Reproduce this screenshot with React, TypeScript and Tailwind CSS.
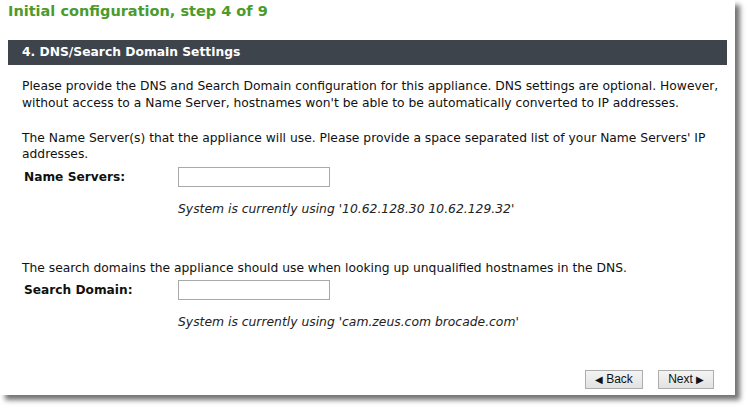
import React from "react";

const font = { fontFamily: '"DejaVu Sans", Verdana, sans-serif' };

function Field({ label, current }: { label: string; current: string }) {
  return (
    <div>
      <div className="flex items-center h-[20px]">
        <span className="w-[156px] pl-[2px] font-bold text-[12.2px] text-[#111]">{label}</span>
        <input
          type="text"
          className="w-[152px] h-[20px] border border-[#a9a9a9] bg-white outline-none"
        />
      </div>
      <div className="pl-[156px] mt-[14px] italic text-[12.35px] leading-[17px] text-[#222]">
        {current}
      </div>
    </div>
  );
}

export default function App() {
  return (
    <div className="w-[750px] h-[410px] bg-white" style={font}>
      <div className="w-[735px] h-[395px] bg-white shadow-[5px_5px_5px_rgba(0,0,0,0.55)] pl-[8px] pt-[1px] flex flex-col">
        <h1 className="text-[14.5px] leading-[20px] font-bold text-[#4b9b2c]">
          Initial configuration, step 4 of 9
        </h1>
        <div className="mt-[19px] w-[719px] h-[25px] bg-[#3e444b] flex items-center pl-[14px]">
          <span className="text-white font-bold text-[12.3px]">4. DNS/Search Domain Settings</span>
        </div>
        <div className="pl-[14px] pr-[10px] text-[12.3px] leading-[17px] text-[#111]">
          <p className="mt-[13px]">
            <span className="block whitespace-nowrap">
              Please provide the DNS and Search Domain configuration for this appliance. DNS settings are optional. However,
            </span>
            <span className="block whitespace-nowrap">
              without access to a Name Server, hostnames won't be able to be automatically converted to IP addresses.
            </span>
          </p>
          <p className="mt-[18px] leading-[16px]">
            <span className="block whitespace-nowrap">
              The Name Server(s) that the appliance will use. Please provide a space separated list of your Name Servers' IP
            </span>
            <span className="block">addresses.</span>
          </p>
          <div className="mt-[5px]">
            <Field label="Name Servers:" current="System is currently using '10.62.128.30 10.62.129.32'" />
          </div>
          <p className="mt-[42px]">
            The search domains the appliance should use when looking up unqualified hostnames in the DNS.
          </p>
          <div className="mt-[3px]">
            <Field label="Search Domain:" current="System is currently using 'cam.zeus.com brocade.com'" />
          </div>
          <div className="flex justify-end gap-[15px] mt-[39px] pr-[11px]">
            <button
              className="w-[58px] h-[19px] border border-[#adadad] bg-gradient-to-b from-[#f4f4f4] to-[#e2e2e2] text-[12px] text-[#111] flex items-center justify-center"
              style={{ fontFamily: '"Liberation Sans", Arial, sans-serif' }}
            >
              <span className="text-[10px] mr-[3px]">◀</span>Back
            </button>
            <button
              className="w-[56px] h-[19px] border border-[#adadad] bg-gradient-to-b from-[#f4f4f4] to-[#e2e2e2] text-[12px] text-[#111] flex items-center justify-center"
              style={{ fontFamily: '"Liberation Sans", Arial, sans-serif' }}
            >
              Next<span className="text-[10px] ml-[3px]">▶</span>
            </button>
          </div>
        </div>
      </div>
    </div>
  );
}
